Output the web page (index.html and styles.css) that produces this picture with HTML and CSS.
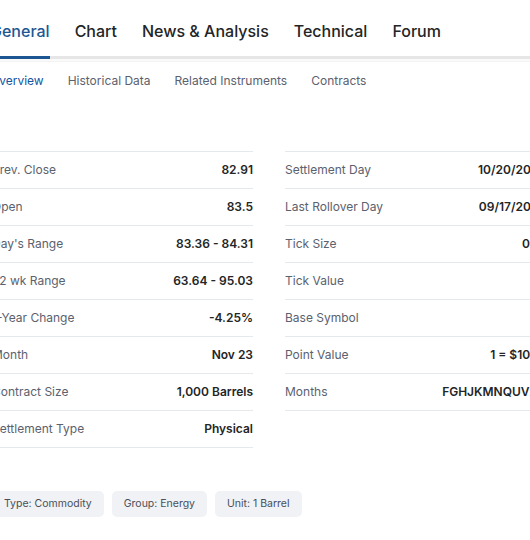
FILE: index.html
```html
<!DOCTYPE html>
<html lang="en">
<head>
<meta charset="utf-8">
<title>Crude Oil Futures - General</title>
<link rel="stylesheet" href="styles.css">
</head>
<body>
<div class="page">
  <nav class="tabs">
    <a class="tab active">General</a>
    <a class="tab">Chart</a>
    <a class="tab">News &amp; Analysis</a>
    <a class="tab">Technical</a>
    <a class="tab">Forum</a>
  </nav>
  <nav class="subtabs">
    <a class="subtab active">Overview</a>
    <a class="subtab">Historical Data</a>
    <a class="subtab">Related Instruments</a>
    <a class="subtab">Contracts</a>
  </nav>
  <section class="specs">
    <dl class="col">
      <div class="row"><dt>Prev. Close</dt><dd>82.91</dd></div>
      <div class="row"><dt>Open</dt><dd>83.5</dd></div>
      <div class="row"><dt>Day's Range</dt><dd>83.36 - 84.31</dd></div>
      <div class="row"><dt>52 wk Range</dt><dd>63.64 - 95.03</dd></div>
      <div class="row"><dt>1-Year Change</dt><dd>-4.25%</dd></div>
      <div class="row"><dt>Month</dt><dd>Nov 23</dd></div>
      <div class="row"><dt>Contract Size</dt><dd>1,000 Barrels</dd></div>
      <div class="row"><dt>Settlement Type</dt><dd>Physical</dd></div>
    </dl>
    <dl class="col">
      <div class="row"><dt>Settlement Day</dt><dd>10/20/2023</dd></div>
      <div class="row"><dt>Last Rollover Day</dt><dd>09/17/2023</dd></div>
      <div class="row"><dt>Tick Size</dt><dd>0.01</dd></div>
      <div class="row"><dt>Tick Value</dt><dd>10</dd></div>
      <div class="row"><dt>Base Symbol</dt><dd>CL</dd></div>
      <div class="row"><dt>Point Value</dt><dd>1 = $1000</dd></div>
      <div class="row"><dt>Months</dt><dd>FGHJKMNQUVXZ</dd></div>
    </dl>
  </section>
  <div class="tags">
    <span class="tag">Type: Commodity</span>
    <span class="tag">Group: Energy</span>
    <span class="tag">Unit: 1 Barrel</span>
  </div>
</div>
</body>
</html>
```
FILE: styles.css
```css
html, body {
  margin: 0;
  padding: 0;
  background: #ffffff;
  overflow: hidden;
}
body {
  font-family: Inter, "Noto Sans", "Liberation Sans", sans-serif;
  color: #232526;
}
.page {
  margin-left: -8px;
  width: 560px;
}
.tabs {
  display: flex;
  gap: 25px;
  padding-top: 19px;
  margin-left: -2px;
  border-bottom: 3px solid #e6e6e6;
  box-shadow: 0 3px 0 -1px #fafafa, 0 4px 0 -1px #f3f3f3;
}
.tab {
  font-size: 16px;
  line-height: 24px;
  font-weight: 500;
  color: #232526;
  padding-bottom: 13px;
  margin-bottom: -3px;
  border-bottom: 3px solid transparent;
}
.tab.active {
  color: #1d5793;
  border-bottom-color: #1d5793;
}
.subtabs {
  display: flex;
  gap: 24px;
  margin-top: 13px;
  margin-left: -2px;
}
.subtab {
  font-size: 12px;
  line-height: 18px;
  color: #5b616e;
}
.subtab.active {
  color: #1256a0;
}
.specs {
  display: grid;
  grid-template-columns: 261px 261px;
  column-gap: 32px;
  align-items: start;
  margin-top: 61px;
}
.col {
  margin: 0;
}
.row {
  display: flex;
  justify-content: space-between;
  align-items: center;
  box-sizing: border-box;
  height: 37px;
  padding-bottom: 1px;
  border-top: 1px solid #e6e9eb;
}
.row:last-child {
  border-bottom: 1px solid #e6e9eb;
  height: 38px;
}
dt {
  font-size: 12px;
  color: #5b616e;
}
dd {
  margin: 0;
  font-size: 12px;
  font-weight: 600;
  color: #232526;
}
.tags {
  display: flex;
  gap: 8px;
  margin-top: 43px;
}
.tag {
  background: #f0f2f5;
  border-radius: 5px;
  padding: 6px 12px;
  font-size: 10.5px;
  line-height: 14px;
  color: #4a4f58;
}
```
